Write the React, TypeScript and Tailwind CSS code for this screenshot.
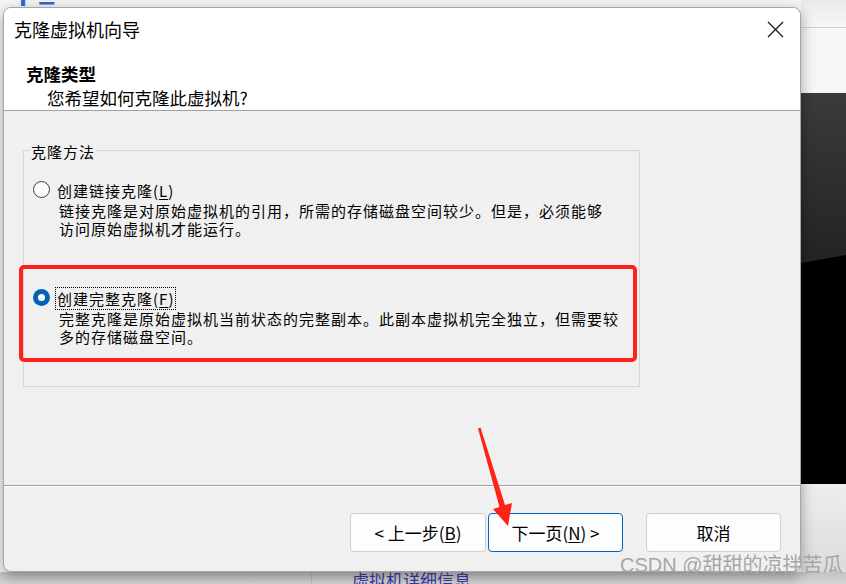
import React from 'react';

const Radio = ({ checked }: { checked: boolean }) =>
  checked ? (
    <div className="mt-[1px] w-[17px] h-[17px] shrink-0 rounded-full bg-[#0062b8] flex items-center justify-center">
      <div className="w-[7px] h-[7px] rounded-full bg-white" />
    </div>
  ) : (
    <div className="mt-[1px] w-[17px] h-[17px] shrink-0 rounded-full border border-[#3c3c3c] bg-[#fbfbfb]" />
  );

const Option = ({
  checked,
  label,
  accel,
  lines,
  focused,
}: {
  checked: boolean;
  label: string;
  accel: string;
  lines: string[];
  focused?: boolean;
}) => (
  <div className="flex ml-[9px]">
    <Radio checked={checked} />
    <div className="ml-[6px] text-[15px] tracking-[1px] text-black">
      <div className="leading-[21px] h-[21px]">
        <span className={focused ? 'outline outline-1 outline-dotted outline-black px-[1px]' : 'px-[1px]'}>
          {label}(<span className="underline underline-offset-2">{accel}</span>)
        </span>
      </div>
      <div className="mt-[1px] ml-[3px] leading-[18px] whitespace-nowrap">
        {lines.map((l) => (
          <div key={l}>{l}</div>
        ))}
      </div>
    </div>
  </div>
);

const Button = ({ children, primary }: { children: React.ReactNode; primary?: boolean }) => (
  <button
    className={`w-full h-[39px] rounded-[4px] border bg-[#fdfdfd] text-[17px] text-black flex items-center justify-center ${
      primary ? 'border-[#0067c0]' : 'border-[#d0d0d0]'
    }`}
  >
    {children}
  </button>
);

export default function App() {
  return (
    <div className="relative w-[846px] h-[584px] overflow-hidden bg-[#f6f6f6] font-['Microsoft_YaHei','Noto_Sans_CJK_SC',sans-serif]">
      {/* desktop behind the dialog */}
      <div className="absolute left-[2px] top-[-30px] text-[28px] leading-[36px] font-bold text-[#2e6ad6] tracking-[2px]">cp_base</div>
      <div className="absolute left-[801px] top-0 w-[45px] h-[28px] bg-gradient-to-b from-[#e9e9e9] to-[#f7f7f7] border-b border-[#d2d2d2]" />
      <div className="absolute left-[801px] top-[93px] w-[45px] h-[391px] bg-black">
        <svg width="45" height="391" viewBox="0 0 45 391">
          <defs>
            <linearGradient id="dk" x1="0" y1="0" x2="0" y2="1">
              <stop offset="0" stopColor="#3b3b3b" />
              <stop offset="1" stopColor="#232323" />
            </linearGradient>
          </defs>
          <polygon points="0,0 45,0 45,162 0,170" fill="url(#dk)" />
        </svg>
      </div>
      <div className="absolute left-[801px] top-[484px] w-[45px] h-[100px] bg-gradient-to-b from-[#eeeeee] to-[#d9d9d9]" />
      <div className="absolute left-0 top-[572px] w-[846px] h-[12px] bg-gradient-to-b from-[#c4c4c4] to-[#d4d4d4]" />
      <div className="absolute left-[311px] top-[572px] w-px h-[12px] bg-[#b8b8b8]" />
      <div className="absolute left-[352px] top-[570px] text-[17px] leading-[20px] text-[#3a3aa8]">虚拟机详细信息</div>

      {/* dialog window */}
      <div className="absolute left-[3px] top-[7px] w-[798px] h-[565px] rounded-[8px] border border-[#a6a6a6] bg-[#f0f0f0] overflow-hidden shadow-[0_4px_14px_rgba(0,0,0,0.35)] flex flex-col">
        <div className="h-[103px] bg-white border-b border-[#a0a0a0] shrink-0">
          <div className="h-[42px] flex items-center justify-between pl-[10px] pr-[16px]">
            <span className="text-[18px] text-black">克隆虚拟机向导</span>
            <svg width="17" height="17" viewBox="0 0 17 17" className="mt-[1px]">
              <path d="M1 1 L16 16 M16 1 L1 16" stroke="#1a1a1a" strokeWidth="1.3" />
            </svg>
          </div>
          <div className="mt-[12px] pl-[22px] text-[17.5px] leading-[24px] font-bold text-black">克隆类型</div>
          <div className="pl-[43px] text-[17.5px] leading-[24px] text-black">您希望如何克隆此虚拟机?</div>
        </div>

        <div className="flex-1 pt-[39px] pl-[19px]">
          <div className="relative w-[617px] h-[237px] border border-[#d6d6d6] pt-[29px]">
            <div className="absolute -top-[8px] left-[6px] px-[1px] bg-[#f0f0f0] text-[15px] leading-[18px] tracking-[1px] text-black">
              克隆方法
            </div>
            <Option
              checked={false}
              label="创建链接克隆"
              accel="L"
              lines={['链接克隆是对原始虚拟机的引用，所需的存储磁盘空间较少。但是，必须能够', '访问原始虚拟机才能运行。']}
            />
            <div className="h-[50px]" />
            <Option
              checked
              focused
              label="创建完整克隆"
              accel="F"
              lines={['完整克隆是原始虚拟机当前状态的完整副本。此副本虚拟机完全独立，但需要较', '多的存储磁盘空间。']}
            />
          </div>
        </div>

        <div className="h-[86px] shrink-0 border-t border-[#a0a0a0] shadow-[inset_0_1px_0_#ffffff] flex items-start pt-[27px] pl-[346px]">
          <div className="w-[136px]">
            <Button>
              &lt; 上一步(<span className="underline underline-offset-2">B</span>)
            </Button>
          </div>
          <div className="w-[135px] ml-[2px]">
            <Button primary>
              下一页(<span className="underline underline-offset-2">N</span>) &gt;
            </Button>
          </div>
          <div className="w-[135px] ml-[23px]">
            <Button>取消</Button>
          </div>
        </div>
      </div>

      {/* annotations */}
      <div className="absolute left-[19px] top-[265px] w-[618px] h-[97px] border-[4px] border-[#ff2219] rounded-[5px]" />
      <svg className="absolute left-0 top-0" width="846" height="584" viewBox="0 0 846 584">
        <polygon points="478,428.5 480.5,427.5 505,505 512,503 508,526 493,509 499.5,507" fill="#ff2216" />
      </svg>
      <div className="absolute left-[620px] top-[553px] text-[20px] leading-[24px] text-[#a6a6a6] font-['Liberation_Sans','Noto_Sans_CJK_SC',sans-serif] whitespace-nowrap">
        CSDN @甜甜的凉拌苦瓜
      </div>
    </div>
  );
}
